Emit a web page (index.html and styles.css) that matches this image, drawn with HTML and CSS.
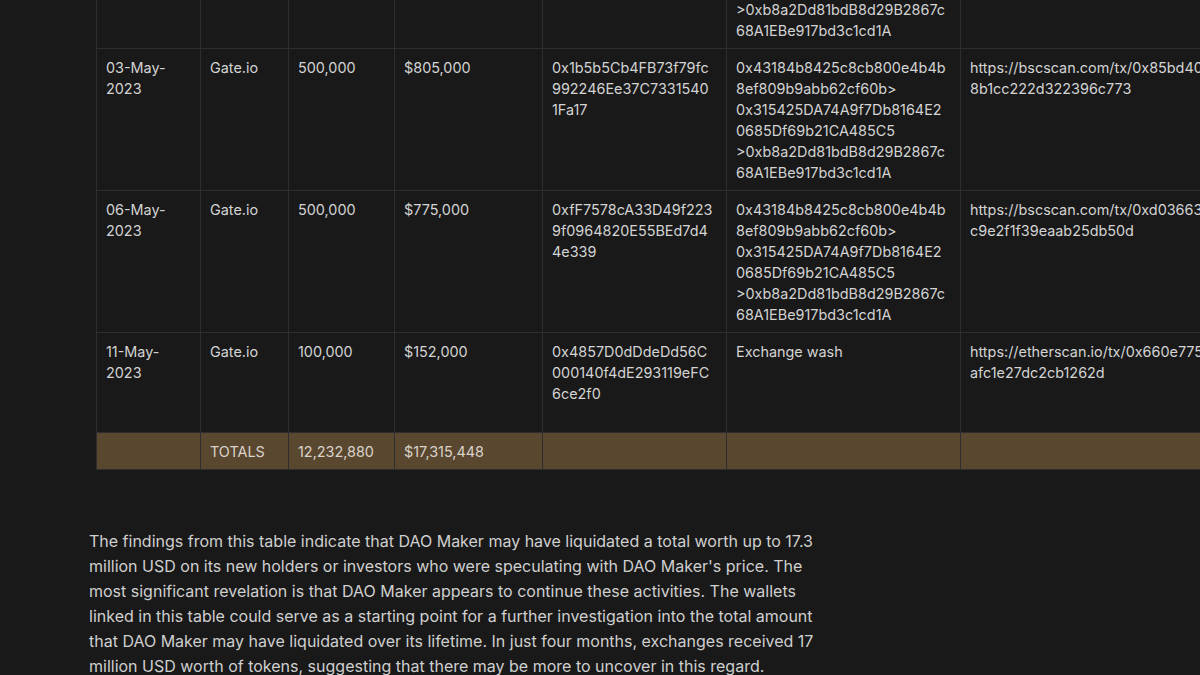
FILE: index.html
```html
<!DOCTYPE html>
<html>
<head>
<meta charset="utf-8">
<link rel="stylesheet" href="styles.css">
</head>
<body>
<main class="page">
  <div class="table-wrap">
    <table class="data">
      <colgroup>
        <col class="c1"><col class="c2"><col class="c3"><col class="c4"><col class="c5"><col class="c6"><col class="c7">
      </colgroup>
      <tbody>
        <tr>
          <td>01-May-<br>2023</td>
          <td>Gate.io</td>
          <td>500,000</td>
          <td>$790,000</td>
          <td>0x2a9e4C0b7D13f5a8<br>e61B0cD29f4A7e3318<br>8cB2</td>
          <td>0x43184b8425c8cb800e4b4b<br>8ef809b9abb62cf60b&gt;<br>0x315425DA74A9f7Db8164E2<br>0685Df69b21CA485C5<br>&gt;0xb8a2Dd81bdB8d29B2867c<br>68A1EBe917bd3c1cd1A</td>
          <td>https://bscscan.com/tx/0x1f7a2c<br>4e9d0b3a7c55e21f</td>
        </tr>
        <tr>
          <td>03-May-<br>2023</td>
          <td>Gate.io</td>
          <td>500,000</td>
          <td>$805,000</td>
          <td>0x1b5b5Cb4FB73f79fc<br>992246Ee37C7331540<br>1Fa17</td>
          <td>0x43184b8425c8cb800e4b4b<br>8ef809b9abb62cf60b&gt;<br>0x315425DA74A9f7Db8164E2<br>0685Df69b21CA485C5<br>&gt;0xb8a2Dd81bdB8d29B2867c<br>68A1EBe917bd3c1cd1A</td>
          <td>https://bscscan.com/tx/0x85bd40<br>8b1cc222d322396c773</td>
        </tr>
        <tr>
          <td>06-May-<br>2023</td>
          <td>Gate.io</td>
          <td>500,000</td>
          <td>$775,000</td>
          <td>0xfF7578cA33D49f223<br>9f0964820E55BEd7d4<br>4e339</td>
          <td>0x43184b8425c8cb800e4b4b<br>8ef809b9abb62cf60b&gt;<br>0x315425DA74A9f7Db8164E2<br>0685Df69b21CA485C5<br>&gt;0xb8a2Dd81bdB8d29B2867c<br>68A1EBe917bd3c1cd1A</td>
          <td>https://bscscan.com/tx/0xd03663<br>c9e2f1f39eaab25db50d</td>
        </tr>
        <tr class="r-short">
          <td>11-May-<br>2023</td>
          <td>Gate.io</td>
          <td>100,000</td>
          <td>$152,000</td>
          <td>0x4857D0dDdeDd56C<br>000140f4dE293119eFC<br>6ce2f0</td>
          <td>Exchange wash</td>
          <td>https://etherscan.io/tx/0x660e775<br>afc1e27dc2cb1262d</td>
        </tr>
        <tr class="totals">
          <td></td>
          <td>TOTALS</td>
          <td>12,232,880</td>
          <td>$17,315,448</td>
          <td></td>
          <td></td>
          <td></td>
        </tr>
      </tbody>
    </table>
  </div>
  <p class="text">The findings from this table indicate that DAO Maker may have liquidated a total worth up to 17.3 million USD on its new holders or investors who were speculating with DAO Maker's price. The most significant revelation is that DAO Maker appears to continue these activities. The wallets linked in this table could serve as a starting point for a further investigation into the total amount that DAO Maker may have liquidated over its lifetime. In just four months, exchanges received 17 million USD worth of tokens, suggesting that there may be more to uncover in this regard.</p>
</main>
</body>
</html>
```

FILE: styles.css
```css
html, body {
  margin: 0;
  padding: 0;
  background: #191919;
  overflow: hidden;
}
body {
  width: 1200px;
  height: 675px;
  font-family: Inter, "Noto Sans", sans-serif;
  color: #d3d3d3;
}
.page {
  padding-left: 89px;
  margin-top: -93px;
}
.table-wrap {
  margin-left: 7px;
  width: 1600px;
}
.data {
  border-collapse: collapse;
  table-layout: fixed;
  width: 1148px;
  font-size: 14.4px;
  line-height: 21px;
}
.c1 { width: 104px; }
.c2 { width: 88px; }
.c3 { width: 106px; }
.c4 { width: 148px; }
.c5 { width: 184px; }
.c6 { width: 234px; }
.c7 { width: 284px; }
.data td {
  border: 1px solid #2e2e2e;
  padding: 8px 9px 7px 9px;
  vertical-align: top;
  white-space: nowrap;
  overflow: hidden;
}
.data tr:first-child td { border-top: none; }
.data td:last-child { border-right: none; }
.r-short td { height: 100px; box-sizing: border-box; }
.totals td {
  background: #5a4730;
  color: #d9d3ca;
}
.text {
  margin: 59px 0 0 0;
  width: 738px;
  font-size: 16px;
  line-height: 25px;
  color: #cfcfcf;
}
```
